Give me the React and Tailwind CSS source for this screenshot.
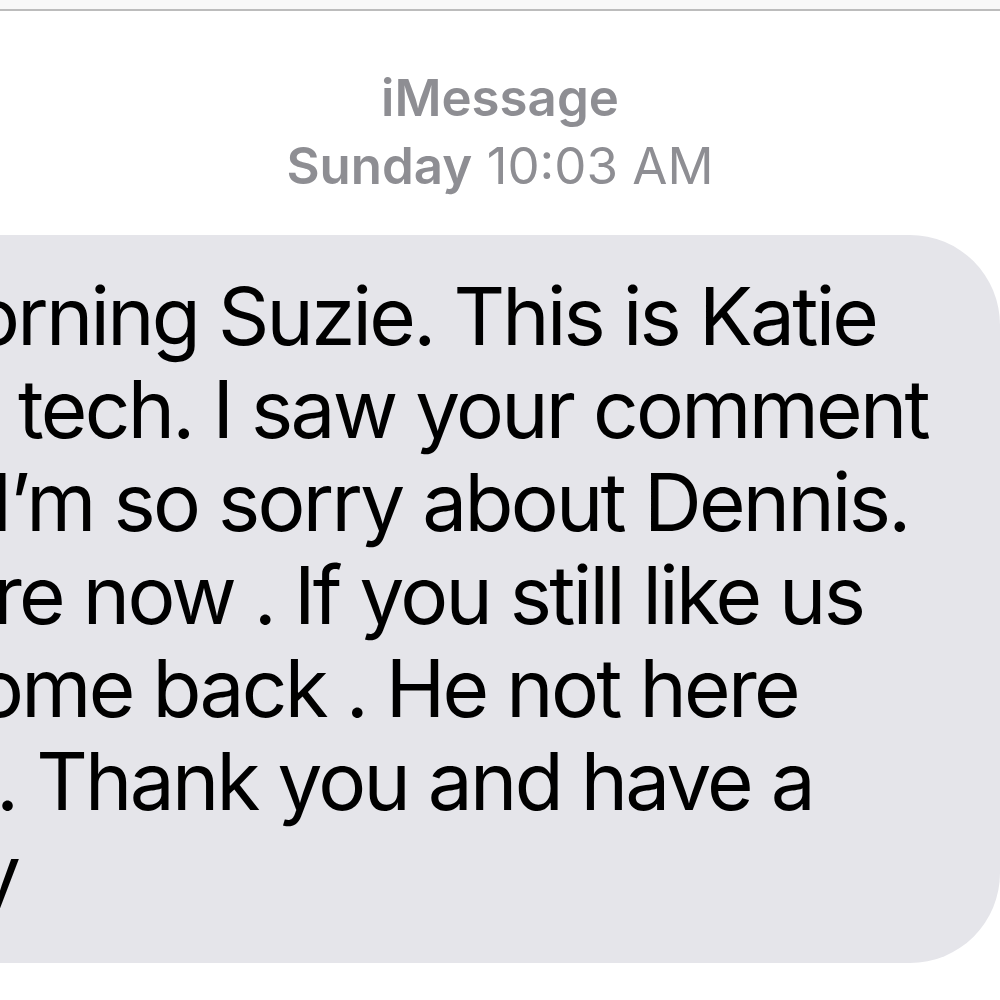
export default function App() {
  const lines = [
    { text: 'orning Suzie. This is Katie', cls: 'ml-[-28px]' },
    { text: 'tech. I saw your comment', cls: 'ml-[18px]' },
    { text: 'I\u2019m so sorry about Dennis.', cls: 'ml-[-9px]' },
    { text: 're now . If you still like us', cls: 'ml-[-7px]' },
    { text: 'ome back . He not here', cls: 'ml-[-24px]' },
    { text: '. Thank you and have a', cls: 'ml-[-4px]' },
    { text: 'y', cls: 'ml-[-24px]' },
  ];

  return (
    <div className="w-[1000px] h-[1000px] overflow-hidden bg-white font-['Inter',sans-serif]">
      {/* status strip */}
      <div className="h-[11px] bg-[#f8f8f8] border-b-2 border-[#bcbcbc]" />

      {/* header */}
      <div className="pt-[53px] text-center text-[51px] leading-[68px] text-[#8e8e93]">
        <div className="font-semibold">iMessage</div>
        <div>
          <span className="font-semibold">Sunday</span> 10:03 AM
        </div>
      </div>

      {/* incoming bubble, cut off at the left edge */}
      <div className="mt-[35px] ml-[-200px] w-[1200px] h-[728px] rounded-r-[90px] bg-[#e5e5ea] pl-[200px] pt-[34px]">
        <div className="text-[80px] leading-[93px] tracking-[-2.7px] text-black whitespace-nowrap">
          {lines.map((l, i) => (
            <div key={i} className={l.cls}>
              {l.text}
            </div>
          ))}
        </div>
      </div>
    </div>
  );
}
